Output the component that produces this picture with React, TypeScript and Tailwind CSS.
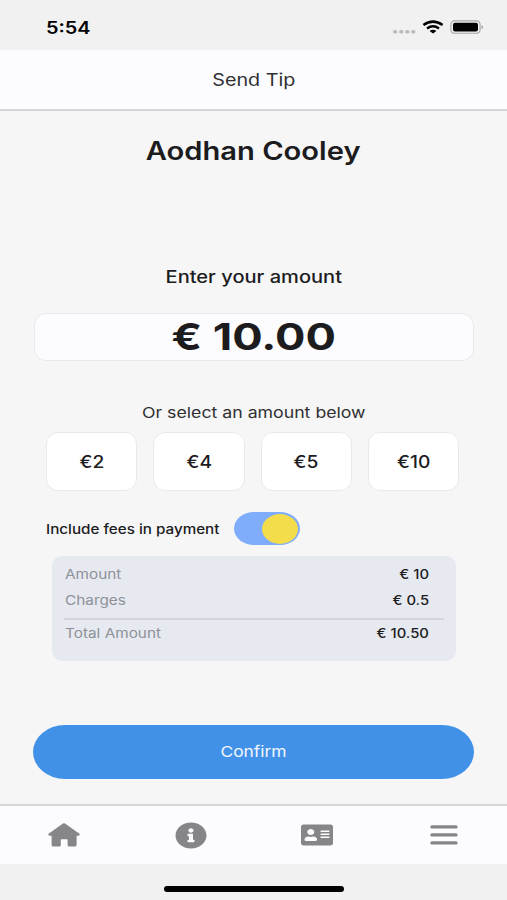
import type { ReactNode } from "react";
import { FaInfoCircle, FaAddressCard } from "react-icons/fa";

const PRESETS = ["€2", "€4", "€5", "€10"];

type StretchProps = {
  children: ReactNode;
  className?: string;
};

// Extended-width look for the UI typeface
function Stretch({ children, className = "" }: StretchProps) {
  return (
    <span className={`inline-block whitespace-pre ${className}`}>
      {children}
    </span>
  );
}

function StatusBar() {
  return (
    <div className="flex h-[50px] shrink-0 items-center justify-between bg-[#f1f1f1] pl-[46px] pr-[23px] pt-1">
      <Stretch className="mt-[3px] origin-left scale-x-[1.17] text-[17px] font-semibold text-black">
        5:54
      </Stretch>
      <svg width="92" height="18" viewBox="392 18 92 18">
        <g fill="#bdbdbf">
          <rect x="393" y="30" width="4.2" height="3.6" rx="1.5" />
          <rect x="399.2" y="30" width="4.2" height="3.6" rx="1.5" />
          <rect x="405.2" y="30" width="4.2" height="3.6" rx="1.5" />
          <rect x="411.2" y="30" width="4.2" height="3.6" rx="1.5" />
        </g>
        <g fill="none" stroke="#000" strokeWidth="2.5">
          <path d="M423.4 25.1Q433 18.1 442.6 25.1" />
          <path d="M427 28.5Q433 24.1 439 28.5" />
        </g>
        <path d="M429.6 31Q433 28.4 436.4 31L433 33.6Z" fill="#000" />
        <rect x="450.9" y="20.9" width="29.2" height="12.4" rx="3.6" fill="none" stroke="#a5a5a5" strokeWidth="1.1" />
        <rect x="453" y="22.8" width="25" height="8.7" rx="2" fill="#000" />
        <path d="M481.5 25.2Q483.2 25.8 483.2 27.1Q483.2 28.4 481.5 29Z" fill="#a5a5a5" />
      </svg>
    </div>
  );
}

function FeeSummary() {
  return (
    <div className="ml-[52px] mr-[51px] mt-[11px] h-[105px] rounded-[10px] bg-[#e6e9f0] pl-[12px] pr-3 text-[13px] font-medium text-[#1c1c1e]">
      <div className="flex h-[26px] items-center justify-between pl-px pr-[15px] pt-3">
        <Stretch className="origin-left scale-x-[1.18] font-normal text-[#8e9197]">Amount</Stretch>
        <Stretch className="origin-right scale-x-[1.14]">€ 10</Stretch>
      </div>
      <div className="flex h-[26px] items-center justify-between pl-px pr-[15px] pt-3">
        <Stretch className="origin-left scale-x-[1.18] font-normal text-[#8e9197]">Charges</Stretch>
        <Stretch className="origin-right scale-x-[1.14]">€ 0.5</Stretch>
      </div>
      <div className="mt-[10px] h-[2px] bg-[#d3d6dc]" />
      <div className="flex h-[27px] items-center justify-between pl-px pr-[15px] pt-px">
        <Stretch className="origin-left scale-x-[1.18] font-normal text-[#8e9197]">Total Amount</Stretch>
        <Stretch className="origin-right scale-x-[1.14]">€ 10.50</Stretch>
      </div>
    </div>
  );
}

function TabBar() {
  return (
    <nav className="grid h-[60px] shrink-0 grid-cols-4 items-center justify-items-center border-t-2 border-[#d7d7d9] bg-[#fcfcfe] pl-px text-[#868688]">
      <svg width="32" height="24" viewBox="0 0 32 24" fill="currentColor">
        <path d="M15 .6Q16-.1 17 .6L31.1 10.6Q31.9 11.2 31.6 12Q31.3 12.7 30.4 12.7H28.6V21.9Q28.6 23.5 26.8 23.5H21.2Q19.6 23.5 19.6 22.2V17Q19.6 16.3 18.8 16.3H13.6Q12.8 16.3 12.8 17V22.2Q12.8 23.5 11.2 23.5H5.4Q3.6 23.5 3.6 21.9V12.7H1.6Q.7 12.7.4 12Q.1 11.2.9 10.6Z" />
      </svg>
      <FaInfoCircle className="h-[27px] w-8" preserveAspectRatio="none" />
      <FaAddressCard className="h-6 w-8" preserveAspectRatio="none" />
      <svg width="28" height="20" viewBox="0 0 28 20" fill="currentColor">
        <rect x=".3" y=".2" width="27.3" height="3.4" rx="1.5" />
        <rect x=".3" y="8.2" width="27.3" height="3.4" rx="1.5" />
        <rect x=".3" y="16.2" width="27.3" height="3.4" rx="1.5" />
      </svg>
    </nav>
  );
}

export default function App() {
  return (
    <div className="flex h-[900px] w-[507px] flex-col overflow-hidden bg-[#f6f6f7] font-[Inter,sans-serif] text-[#1c1c1e]">
      <StatusBar />
      <header className="flex h-[61px] shrink-0 items-center justify-center border-b-2 border-[#d5d5d7] bg-[#fcfcfe] pt-[3px]">
        <Stretch className="scale-x-[1.16] text-[17px] text-[#303032]">Send Tip</Stretch>
      </header>

      <main className="flex flex-1 flex-col">
        <h1 className="mt-[22px] text-center text-[25px] leading-9 font-semibold">
          <Stretch className="scale-x-[1.165]">Aodhan Cooley</Stretch>
        </h1>
        <h2 className="mt-[96px] text-center text-[17px] leading-6 font-medium">
          <Stretch className="scale-x-[1.18]">Enter your amount</Stretch>
        </h2>
        <div className="ml-[34px] mr-[33px] mt-[24px] flex h-12 items-center justify-center rounded-xl border border-[#e7eaec] bg-[#fcfcfe] text-[37px] font-bold">
          <Stretch className="scale-x-[1.22]">€ 10.00</Stretch>
        </div>
        <p className="mt-[42px] text-center text-[15px] leading-5 text-[#303032]">
          <Stretch className="scale-x-[1.18]">Or select an amount below</Stretch>
        </p>
        <div className="ml-[46px] mr-[48px] mt-[9px] grid grid-cols-4 gap-4">
          {PRESETS.map((amount) => (
            <button
              key={amount}
              type="button"
              className="h-[59px] rounded-xl border border-[#e7eaec] bg-white pt-[2px] text-[17px] font-medium"
            >
              <Stretch className="scale-x-[1.13]">{amount}</Stretch>
            </button>
          ))}
        </div>
        <div className="mt-[21px] flex h-[33px] items-center pl-[46px]">
          <div className="w-[188px] pt-[2px] text-[13px] font-medium">
            <Stretch className="origin-left scale-x-[1.17]">Include fees in payment</Stretch>
          </div>
          <button
            type="button"
            role="switch"
            aria-checked="true"
            className="flex h-[33px] w-[66px] items-center justify-end rounded-[20px/16.5px] bg-[#7facfb] pr-[2px]"
          >
            <span className="h-[30px] w-9 rounded-[50%] bg-[#f5dc4b]" />
          </button>
        </div>
        <FeeSummary />
        <button
          type="button"
          className="mx-[33px] mt-[64px] h-[54px] rounded-[32px/27px] bg-[#4291e8] pt-px text-[15px] text-[#f2f7fd]"
        >
          <Stretch className="scale-x-[1.16]">Confirm</Stretch>
        </button>
      </main>

      <TabBar />
      <div className="flex h-9 shrink-0 justify-center bg-[#f1f1f1] pl-px pt-[22px]">
        <div className="h-[6px] w-[180px] rounded-full bg-black" />
      </div>
    </div>
  );
}
